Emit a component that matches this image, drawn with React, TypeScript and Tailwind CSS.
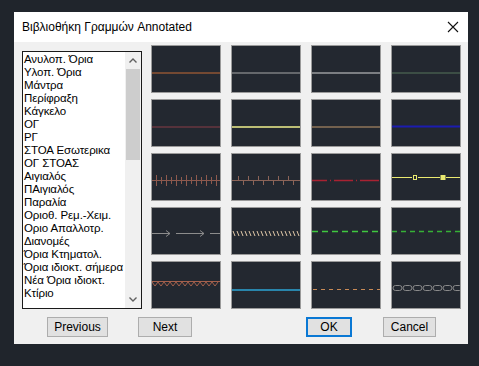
import React from 'react';

const items = [
  'Ανυλοπ. Όρια',
  'Υλοπ. Όρια',
  'Μάντρα',
  'Περίφραξη',
  'Κάγκελο',
  'ΟΓ',
  'ΡΓ',
  'ΣΤΟΑ Εσωτερικα',
  'ΟΓ ΣΤΟΑΣ',
  'Αιγιαλός',
  'ΠΑιγιαλός',
  'Παραλία',
  'Οριοθ. Ρεμ.-Χειμ.',
  'Οριο Απαλλοτρ.',
  'Διανομές',
  'Όρια Κτηματολ.',
  'Όρια ιδιοκτ. σήμερα',
  'Νέα Όρια ιδιοκτ.',
  'Κτίριο',
];

const Solid = ({ color, y = 27, w = 1 }: { color: string; y?: number; w?: number }) => (
  <line x1="0" y1={y} x2="68" y2={y} stroke={color} strokeWidth={w} />
);

const range = (from: number, to: number, step: number) => {
  const out: number[] = [];
  for (let v = from; v <= to; v += step) out.push(v);
  return out;
};

const patterns: React.ReactNode[] = [
  <Solid color="#c56a34" />,
  <Solid color="#a8a8a8" />,
  <Solid color="#d4d4d4" />,
  <Solid color="#56755a" />,
  <Solid color="#8a3c46" />,
  <Solid color="#f0f08c" w={1.5} />,
  <Solid color="#c49a6c" />,
  <Solid color="#1c1cb0" y={26.5} w={2} />,
  // ticks crossing
  <g stroke="#8e5a4e">
    <line x1="0" y1="26.5" x2="68" y2="26.5" />
    {range(4, 64, 5).map((x, i) => (
      <line key={x} x1={x + 0.5} y1={i % 2 ? 23 : 21} x2={x + 0.5} y2={i % 2 ? 30 : 32} />
    ))}
  </g>,
  // alternating ticks
  <g stroke="#8c6458">
    <line x1="0" y1="26.5" x2="68" y2="26.5" />
    {range(6, 64, 5).map((x, i) => (
      <line key={x} x1={x + 0.5} y1={i % 2 ? 26.5 : 22} x2={x + 0.5} y2={i % 2 ? 31 : 26.5} />
    ))}
  </g>,
  // dash dot
  <g stroke="#a82232" strokeWidth="1.5">
    {range(-4, 68, 26).map((x) => (
      <g key={x}>
        <line x1={x} y1="26.5" x2={x + 19} y2="26.5" />
        <line x1={x + 22} y1="26.5" x2={x + 23} y2="26.5" />
      </g>
    ))}
  </g>,
  // yellow with squares
  <g stroke="#eaea70">
    <line x1="0" y1="23.5" x2="20" y2="23.5" />
    <line x1="26" y1="23.5" x2="48" y2="23.5" />
    <line x1="54" y1="23.5" x2="68" y2="23.5" />
    <rect x="21.5" y="21.5" width="3" height="4" fill="none" />
    <rect x="49" y="21.5" width="4" height="4" fill="#eaea70" />
  </g>,
  // arrows
  <g stroke="#8c8c8c" fill="none">
    <line x1="0" y1="25.5" x2="18" y2="25.5" />
    <polyline points="14,22.5 18,25.5 14,28.5" />
    <line x1="24" y1="25.5" x2="52" y2="25.5" />
    <polyline points="48,22.5 52,25.5 48,28.5" />
    <line x1="58" y1="25.5" x2="68" y2="25.5" />
  </g>,
  // hatch
  <g stroke="#e0c8a8">
    {range(1, 66, 4).map((x) => (
      <line key={x} x1={x} y1="23" x2={x + 2} y2="28" />
    ))}
  </g>,
  <line x1="0" y1="23.5" x2="68" y2="23.5" stroke="#3fc83f" strokeWidth="1.5" strokeDasharray="6 4" />,
  <line x1="0" y1="23.5" x2="68" y2="23.5" stroke="#36b036" strokeWidth="1.5" strokeDasharray="5 4" />,
  // zig band
  <g stroke="#a4604c" fill="none">
    <line x1="0" y1="19.5" x2="68" y2="19.5" />
    <polyline
      points={range(0, 68, 3)
        .map((x, i) => `${x},${i % 2 ? 24 : 20}`)
        .join(' ')}
    />
  </g>,
  <Solid color="#2ca4d4" y={28} w={1.5} />,
  <line x1="1" y1="27.5" x2="68" y2="27.5" stroke="#c88a56" strokeDasharray="4 4" />,
  // chain
  <g stroke="#8a8a8a" fill="none">
    {range(1, 64, 10).map((x) => (
      <rect key={x} x={x} y="23.5" width="9" height="5" rx="2.5" />
    ))}
  </g>,
];

const Tile = ({ children }: { children: React.ReactNode }) => (
  <div className="w-[70px] h-[48px] border border-[#9a9a9a] bg-[#232830]">
    <svg width="68" height="46" viewBox="0 0 68 46" className="block">
      {children}
    </svg>
  </div>
);

const Btn = ({ label, w, primary }: { label: string; w: string; primary?: boolean }) => (
  <button
    className={`${w} h-[20px] bg-[#e1e1e1] text-[12px] text-black leading-none flex items-center justify-center ${
      primary ? 'border-2 border-[#0a78d4]' : 'border border-[#adadad]'
    }`}
  >
    {label}
  </button>
);

export default function App() {
  return (
    <div
      className="w-[479px] h-[366px] bg-[#20252c] pt-[12px] pl-[14px]"
      style={{ fontFamily: '"Liberation Sans", Arial, sans-serif' }}
    >
      <div className="w-[454px] h-[332px] flex flex-col bg-[#f0f0f0]">
        <div className="h-[30px] bg-white flex items-center justify-between pl-[8px] pr-[9px]">
          <span className="text-[12px] text-black">Βιβλιοθήκη Γραμμών Annotated</span>
          <svg width="12" height="12" viewBox="0 0 12 12">
            <path d="M1 1 L11 11 M11 1 L1 11" stroke="#111" strokeWidth="1.1" />
          </svg>
        </div>
        <div className="flex pl-[8px] pt-[3px]">
          <div className="mt-[6px] w-[120px] h-[258px] border border-[#1a1a1a] bg-white flex">
            <ul className="flex-1 pt-[1px] pl-[1px] text-[11.5px] tracking-[-0.1px] leading-[13px] text-black whitespace-nowrap overflow-hidden">
              {items.map((t) => (
                <li key={t}>{t}</li>
              ))}
            </ul>
            <div className="w-[16px] bg-[#f0f0f0] flex flex-col">
              <div className="h-[17px] flex items-center justify-center">
                <svg width="8" height="5" viewBox="0 0 8 5">
                  <path d="M0.5 4.5 L4 1 L7.5 4.5" stroke="#606060" strokeWidth="1.4" fill="none" />
                </svg>
              </div>
              <div className="mx-[1px] h-[91px] bg-[#cdcdcd]" />
              <div className="flex-1" />
              <div className="h-[17px] flex items-center justify-center">
                <svg width="8" height="5" viewBox="0 0 8 5">
                  <path d="M0.5 0.5 L4 4 L7.5 0.5" stroke="#606060" strokeWidth="1.4" fill="none" />
                </svg>
              </div>
            </div>
          </div>
          <div className="ml-[9px] grid grid-cols-4 gap-x-[10px] gap-y-[6px]">
            {patterns.map((p, i) => (
              <Tile key={i}>{p}</Tile>
            ))}
          </div>
        </div>
        <div className="flex items-start mt-[8px] pl-[33px]">
          <Btn label="Previous" w="w-[61px]" />
          <div className="ml-[30px]">
            <Btn label="Next" w="w-[54px]" />
          </div>
          <div className="ml-[114px]">
            <Btn label="OK" w="w-[46px]" primary />
          </div>
          <div className="ml-[31px]">
            <Btn label="Cancel" w="w-[53px]" />
          </div>
        </div>
      </div>
    </div>
  );
}
